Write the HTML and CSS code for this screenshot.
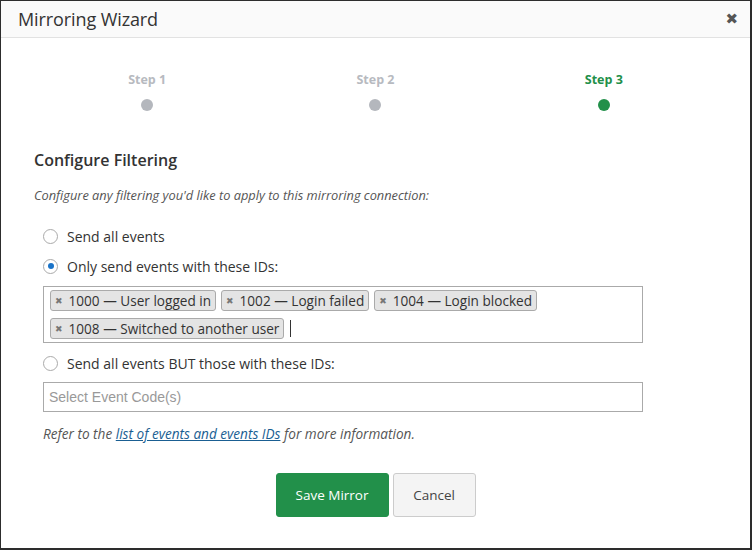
FILE: index.html
```html
<!DOCTYPE html>
<html>
<head>
<meta charset="utf-8">
<link rel="stylesheet" href="styles.css">
</head>
<body>
<div class="modal">
  <div class="modal-header">
    <h1 class="title">Mirroring Wizard</h1>
    <span class="close">&#x2716;</span>
  </div>
  <div class="modal-body">
    <div class="steps">
      <div class="step"><span class="step-label">Step 1</span><span class="dot"></span></div>
      <div class="step"><span class="step-label">Step 2</span><span class="dot"></span></div>
      <div class="step active"><span class="step-label">Step 3</span><span class="dot"></span></div>
    </div>
    <h2 class="section-title">Configure Filtering</h2>
    <p class="hint">Configure any filtering you'd like to apply to this mirroring connection:</p>
    <div class="options">
      <label class="radio"><span class="radio-circle"></span>Send all events</label>
      <label class="radio"><span class="radio-circle checked"></span>Only send events with these IDs:</label>
      <div class="tagbox">
        <span class="tag"><span class="tag-x">&#x2716;</span>1000 — User logged in</span>
        <span class="tag"><span class="tag-x">&#x2716;</span>1002 — Login failed</span>
        <span class="tag"><span class="tag-x">&#x2716;</span>1004 — Login blocked</span>
        <span class="tag"><span class="tag-x">&#x2716;</span>1008 — Switched to another user</span>
        <span class="caret"></span>
      </div>
      <label class="radio"><span class="radio-circle"></span>Send all events BUT those with these IDs:</label>
      <div class="select">Select Event Code(s)</div>
      <p class="refer">Refer to the <a href="#" class="link">list of events and events IDs</a> for more information.</p>
    </div>
    <div class="actions">
      <button class="btn btn-primary">Save Mirror</button>
      <button class="btn btn-default">Cancel</button>
    </div>
  </div>
</div>
</body>
</html>
```
FILE: styles.css
```css
html, body {
  margin: 0;
  padding: 0;
  background: #2d2d2d;
}
body {
  padding: 1px 2px 2px 1px;
  font-family: "Open Sans", "Noto Sans", sans-serif;
  color: #333;
}
.modal {
  background: #fff;
  height: 547px;
  box-sizing: border-box;
  display: flex;
  flex-direction: column;
}
.modal-header {
  height: 36px;
  border-bottom: 1px solid #e2e2e2;
  background: #fafafa;
  display: flex;
  align-items: center;
  justify-content: space-between;
  padding: 0 12px 0 17px;
}
.title {
  margin: 0;
  font-size: 18px;
  font-weight: 400;
  color: #333;
  letter-spacing: -0.1px;
}
.close {
  font-size: 15px;
  color: #555;
  font-weight: bold;
  font-family: "DejaVu Sans", sans-serif;
}
.modal-body {
  padding: 0 32px 0 32px;
  display: flex;
  flex-direction: column;
}
.steps {
  display: grid;
  grid-template-columns: repeat(3, 1fr);
  padding-top: 33px;
}
.step {
  display: flex;
  flex-direction: column;
  align-items: center;
  gap: 11px;
}
.step-label {
  font-size: 12.5px;
  font-weight: 700;
  color: #b7bac0;
  line-height: 17px;
}
.dot {
  width: 12px;
  height: 12px;
  border-radius: 50%;
  background: #b4b7bd;
}
.step.active .step-label { color: #22904a; }
.step.active .dot { background: #22904a; }
.section-title {
  margin: 38px 0 0 1px;
  font-size: 16px;
  font-weight: 600;
  color: #333;
  line-height: 22px;
}
.hint {
  margin: 16px 0 0 1px;
  font-size: 12.8px;
  font-style: italic;
  color: #555;
  line-height: 17px;
}
.options {
  padding-left: 10px;
  padding-right: 75px;
  margin-top: 17px;
  display: flex;
  flex-direction: column;
}
.radio {
  display: flex;
  align-items: center;
  font-size: 14px;
  color: #333;
  height: 30px;
}
.radio-circle {
  width: 15px;
  height: 15px;
  border: 1px solid #aaa;
  border-radius: 50%;
  margin-right: 9px;
  box-sizing: border-box;
  background: #fff;
  position: relative;
}
.radio-circle.checked::after {
  content: "";
  position: absolute;
  left: 3.5px;
  top: 3.5px;
  width: 6px;
  height: 6px;
  border-radius: 50%;
  background: #1a73c8;
}
.tagbox {
  margin-top: 5px;
  border: 1px solid #aaa;
  min-height: 57px;
  box-sizing: border-box;
  padding: 3px 4px 2px 6px;
  display: flex;
  flex-wrap: wrap;
  align-items: center;
  column-gap: 5px;
  row-gap: 7px;
  align-content: flex-start;
  margin-bottom: 5px;
}
.tag {
  display: inline-flex;
  align-items: center;
  height: 21px;
  box-sizing: border-box;
  border: 1px solid #aaa;
  border-radius: 3px;
  background: #e4e4e4;
  padding: 0 4px 0 4px;
  font-size: 13.6px;
  color: #333;
}
.tag-x {
  font-family: "DejaVu Sans", sans-serif;
  font-size: 9px;
  color: #777;
  margin-right: 6px;
  font-weight: bold;
}
.caret {
  width: 1px;
  height: 17px;
  background: #333;
  margin-left: 1px;
}
.select {
  margin-top: 4px;
  border: 1px solid #aaa;
  height: 30px;
  box-sizing: border-box;
  display: flex;
  align-items: center;
  padding-left: 5px;
  font-family: "Liberation Sans", Arial, sans-serif;
  font-size: 14px;
  color: #999;
}
.refer {
  margin: 13px 0 0 0;
  font-size: 13.6px;
  font-style: italic;
  color: #555;
  line-height: 17px;
}
.link {
  color: #1a5e92;
  text-decoration: underline;
}
.actions {
  display: flex;
  justify-content: center;
  gap: 4px;
  margin-top: 31px;
  padding-left: 0;
}
.btn {
  height: 44px;
  border-radius: 3px;
  font-family: "Open Sans", "Noto Sans", sans-serif;
  font-size: 13.5px;
  cursor: pointer;
}
.btn-primary {
  width: 113px;
  background: #22904a;
  border: 1px solid #22904a;
  color: #fff;
}
.btn-default {
  width: 83px;
  background: #f4f4f4;
  border: 1px solid #ccc;
  color: #444;
}
```
